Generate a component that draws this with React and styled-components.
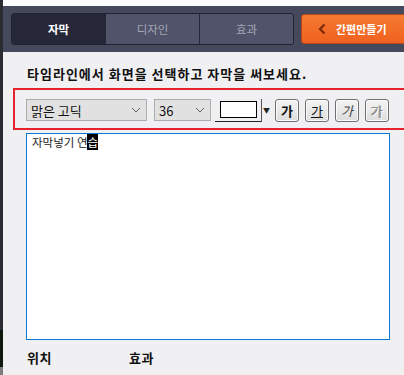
import styled, { createGlobalStyle } from "styled-components";

const GlobalStyle = createGlobalStyle`
  html, body {
    margin: 0;
    padding: 0;
    background: #f0f0f2;
  }
  body {
    font-family: "Noto Sans CJK KR", "Noto Sans", sans-serif;
  }
`;

const Frame = styled.div`
  display: flex;
  width: 404px;
  height: 375px;
  overflow: hidden;
`;

const SideEdge = styled.div`
  width: 3px;
  flex-shrink: 0;
  background: linear-gradient(#2b2c31 0, #2b2c31 88%, #0d1a0d 88%, #0d1a0d 98%, #7c7c7c 98%);
`;

const Main = styled.div`
  flex: 1;
  display: flex;
  flex-direction: column;
  min-width: 0;
`;

const TopGap = styled.div`
  height: 6px;
  background: #fdfdfd;
`;

const TabBar = styled.div`
  display: flex;
  align-items: center;
  gap: 7px;
  height: 46px;
  padding: 0 0 0 8px;
  background: #46485b;
  overflow: hidden;
`;

const TabGroup = styled.div`
  display: flex;
  height: 30px;
  border: 1px solid #22232f;
  border-radius: 3px;
  overflow: hidden;
  flex-shrink: 0;
`;

const Tab = styled.div`
  width: 93px;
  display: flex;
  align-items: center;
  justify-content: center;
  font-size: 11.5px;
  font-weight: ${(p) => (p.$active ? 700 : 400)};
  color: ${(p) => (p.$active ? "#ffffff" : "#a4a6b5")};
  background: ${(p) => (p.$active ? "#26283a" : "#50536a")};
  & + & {
    border-left: 1px solid #262837;
  }
`;

const QuickButton = styled.div`
  flex-shrink: 0;
  width: 120px;
  height: 30px;
  display: flex;
  align-items: center;
  gap: 10px;
  padding-left: 16px;
  box-sizing: border-box;
  border: 1px solid #b8461a;
  border-radius: 3px;
  background: linear-gradient(#f57a32, #f0611f);
  color: #ffffff;
  font-size: 11px;
  font-weight: 700;
`;

const Content = styled.div`
  flex: 1;
  display: flex;
  flex-direction: column;
  padding: 12px 0 0 10px;
`;

const Title = styled.div`
  padding-left: 14px;
  font-size: 13px;
  font-weight: 700;
  color: #111;
  line-height: 20px;
  letter-spacing: 1px;
`;

const Toolbar = styled.div`
  display: flex;
  align-items: center;
  width: 382px;
  height: 36px;
  margin-top: 4px;
  padding: 2px 0 0 11px;
  box-sizing: content-box;
  border: 2px solid #e8222c;
`;

const Select = styled.div`
  width: ${(p) => p.$w}px;
  height: 22px;
  display: flex;
  align-items: center;
  justify-content: space-between;
  box-sizing: border-box;
  padding: 0 5px 0 4px;
  margin-right: ${(p) => p.$gap}px;
  background: #e1e1e1;
  border: 1px solid #adadad;
  font-size: 13px;
  color: #111;
`;

const ColorPicker = styled.div`
  display: flex;
  align-items: stretch;
  height: 23px;
  width: 56px;
  margin-right: 4px;
`;

const SwatchWell = styled.div`
  width: 46px;
  display: flex;
  align-items: center;
  justify-content: flex-end;
  padding-right: 4px;
  box-sizing: border-box;
  border-bottom: 1px solid #222;
`;

const Swatch = styled.div`
  width: 37px;
  height: 17px;
  box-sizing: border-box;
  border: 1px solid #000;
  background: #fff;
`;

const PickerArrow = styled.div`
  flex: 1;
  display: flex;
  align-items: center;
  justify-content: center;
  border-left: 1px solid #555;
  font-size: 7px;
  color: #222;
`;

const StyleButtons = styled.div`
  display: flex;
  gap: 6px;
`;

const StyleButton = styled.div`
  width: 24px;
  height: 23px;
  display: flex;
  align-items: center;
  justify-content: center;
  box-sizing: border-box;
  border: 1px solid #707070;
  border-radius: 3px;
  box-shadow: inset 0 0 0 1px #fafafa;
  background: linear-gradient(#f4f4f4, #dcdcdc);
  font-size: 13px;
  color: ${(p) => p.$color || "#111"};
  font-weight: ${(p) => p.$weight || 400};
  text-decoration: ${(p) => (p.$underline ? "underline" : "none")};
  font-style: ${(p) => (p.$italic ? "italic" : "normal")};
  text-shadow: ${(p) => (p.$outline ? "1px 1px 0 #fff, -1px 0 0 #999" : "none")};
`;

const Editor = styled.div`
  width: 364px;
  height: 207px;
  margin: 3px 0 0 13px;
  box-sizing: border-box;
  border: 1px solid #0a78d4;
  background: #fff;
  padding: 2px 5px;
  font-size: 11.5px;
  line-height: 12px;
  color: #222;
`;

const Selected = styled.span`
  background: #000;
  color: #fff;
`;

const Labels = styled.div`
  display: flex;
  padding: 8px 0 0 14px;
  font-size: 13px;
  font-weight: 700;
  color: #111;
  letter-spacing: 0.5px;
`;

const Label = styled.div`
  width: ${(p) => p.$w}px;
`;

const Chevron = () => (
  <svg width="8" height="12" viewBox="0 0 8 12">
    <path d="M6.5 1.5 L2 6 L6.5 10.5" fill="none" stroke="#7a2a08" strokeWidth="2.2" />
  </svg>
);

const Caret = () => (
  <svg width="10" height="6" viewBox="0 0 10 6">
    <path d="M1 1 L5 5 L9 1" fill="none" stroke="#666" strokeWidth="1" />
  </svg>
);

export default function App() {
  return (
    <Frame>
      <GlobalStyle />
      <SideEdge />
      <Main>
        <TopGap />
        <TabBar>
          <TabGroup>
            <Tab $active>자막</Tab>
            <Tab>디자인</Tab>
            <Tab>효과</Tab>
          </TabGroup>
          <QuickButton>
            <Chevron />
            간편만들기
          </QuickButton>
        </TabBar>
        <Content>
          <Title>타임라인에서 화면을 선택하고 자막을 써보세요.</Title>
          <Toolbar>
            <Select $w={121} $gap={7}>
              맑은 고딕
              <Caret />
            </Select>
            <Select $w={57} $gap={4}>
              36
              <Caret />
            </Select>
            <ColorPicker>
              <SwatchWell>
                <Swatch />
              </SwatchWell>
              <PickerArrow>▼</PickerArrow>
            </ColorPicker>
            <StyleButtons>
              <StyleButton $weight={700}>가</StyleButton>
              <StyleButton $underline>가</StyleButton>
              <StyleButton $italic $color="#444">가</StyleButton>
              <StyleButton $outline $color="#888">가</StyleButton>
            </StyleButtons>
          </Toolbar>
          <Editor>
            자막넣기 연<Selected>습</Selected>
          </Editor>
          <Labels>
            <Label $w={102}>위치</Label>
            <Label $w={60}>효과</Label>
          </Labels>
        </Content>
      </Main>
    </Frame>
  );
}
